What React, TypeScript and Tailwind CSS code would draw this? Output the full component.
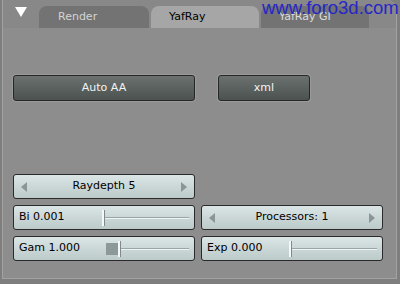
import React from "react";

const font = { fontFamily: '"DejaVu Sans", "Liberation Sans", sans-serif' };

function DarkBtn({ label, w }: { label: string; w: string }) {
  return (
    <div
      className={`${w} h-[26px] flex items-center justify-center rounded-[3px] border border-[#262626] bg-gradient-to-b from-[#6a716e] to-[#4b5250] text-[#f4f4f4] text-[11px] shadow-[0_0_0_1px_#9a9a9a]`}
    >
      {label}
    </div>
  );
}

function Arrow({ dir }: { dir: "l" | "r" }) {
  return (
    <svg width="6" height="10" viewBox="0 0 6 10">
      {dir === "l" ? (
        <polygon points="6,0 0,5 6,10" fill="#8a9696" />
      ) : (
        <polygon points="0,0 6,5 0,10" fill="#8a9696" />
      )}
    </svg>
  );
}

function NumBtn({ label }: { label: string }) {
  return (
    <div className="w-[182px] h-[25px] flex items-center justify-between px-[7px] rounded-[3px] border border-[#2a2a2a] bg-gradient-to-b from-[#dbe5e5] to-[#bccaca] text-black text-[11px]">
      <Arrow dir="l" />
      <span>{label}</span>
      <Arrow dir="r" />
    </div>
  );
}

function Slider({ label, thumb, block }: { label: string; thumb: number; block?: boolean }) {
  return (
    <div className="relative w-[182px] h-[25px] flex items-center rounded-[3px] border border-[#2a2a2a] bg-gradient-to-b from-[#dbe5e5] to-[#bccaca] text-black text-[11px] pl-[5px]">
      <span>{label}</span>
      <div className="absolute right-[5px] top-[11px] h-[2px] border-t border-[#98a6a6] border-b border-b-[#eef4f4]" style={{ left: thumb }} />
      {block && (
        <div className="absolute top-[6px] h-[12px] w-[12px] bg-[#8d9898]" style={{ left: thumb - 12 }} />
      )}
      <div className="absolute top-[4px] h-[16px] w-[3px] bg-[#f4f8f8] border-r border-[#7f8a8a]" style={{ left: thumb }} />
    </div>
  );
}

export default function App() {
  return (
    <div className="w-[400px] h-[284px] bg-[#7e7e7e] overflow-hidden relative" style={font}>
      <div className="ml-[2px] w-[395px] h-[279px] rounded-tr-[10px] border-r border-b border-l border-[#a2a2a2] bg-[#8d8d8d] flex flex-col">
        <div className="h-[28px] flex items-end bg-[#888888] rounded-tr-[10px]">
          <div className="w-[36px] h-full flex items-center justify-center pb-[4px]">
            <svg width="12" height="10" viewBox="0 0 12 10">
              <polygon points="0,0 12,0 6,10" fill="#ffffff" />
            </svg>
          </div>
          <div className="w-[110px] h-[22px] rounded-t-[8px] bg-[#737373] text-[#d4d4d4] text-[11px] flex items-center pl-[19px]">
            Render
          </div>
          <div className="ml-[2px] w-[108px] h-[22px] rounded-t-[8px] bg-[#a6a6a6] text-black text-[11px] flex items-center pl-[18px]">
            YafRay
          </div>
          <div className="ml-[2px] w-[108px] h-[22px] rounded-t-[8px] bg-[#737373] text-[#dcdcdc] text-[11px] flex items-center pl-[18px]">
            YafRay GI
          </div>
        </div>
        <div className="flex flex-col pl-[10px]">
          <div className="mt-[47px] flex gap-[23px]">
            <DarkBtn label="Auto AA" w="w-[182px]" />
            <DarkBtn label="xml" w="w-[92px]" />
          </div>
          <div className="mt-[73px]">
            <NumBtn label="Raydepth 5" />
          </div>
          <div className="mt-[6px] flex gap-[6px]">
            <Slider label="Bi 0.001" thumb={88} />
            <NumBtn label="Processors: 1" />
          </div>
          <div className="mt-[6px] flex gap-[6px]">
            <Slider label="Gam 1.000" thumb={104} block />
            <Slider label="Exp 0.000" thumb={87} />
          </div>
        </div>
      </div>
      <div
        className="absolute top-[-4px] left-[262px] text-[18.5px] leading-[24px] text-[#2626c8]"
        style={{ fontFamily: '"Liberation Sans", Arial, sans-serif' }}
      >
        www.foro3d.com
      </div>
    </div>
  );
}
